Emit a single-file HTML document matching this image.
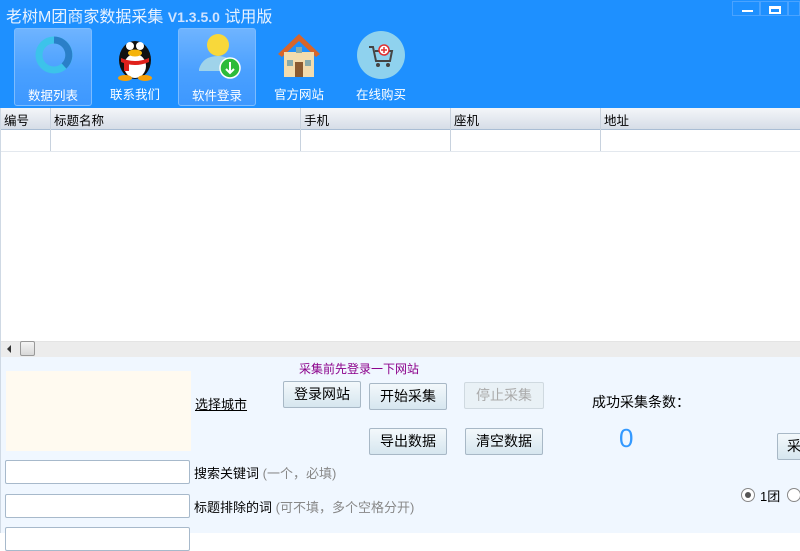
<!DOCTYPE html>
<html><head><meta charset="utf-8"><style>
*{margin:0;padding:0;box-sizing:border-box}
body{width:800px;height:533px;overflow:hidden;background:#fff;font-family:"Liberation Sans","Noto Sans CJK SC","WenQuanYi Zen Hei",sans-serif;font-size:12px;position:relative}
.abs{position:absolute}
.top{left:0;top:0;width:800px;height:108px;background:#1e90ff}
.title{left:6px;top:3px;color:#fff;font-size:16px;color:#e8f2ff}
.title .v{font-size:14px;font-weight:bold;color:#cfe3ff}
.tb{top:28px;width:78px;height:78px;color:#fff;font-size:12.5px;text-align:center}
.tb.sel{background:linear-gradient(#6fb4ff,#4aa0ff 55%,#3d98ff);border:1px solid #7cbcff;border-radius:3px}
.tb span{position:absolute;left:0;right:0;top:56px}
.tb svg{position:absolute;left:14px;top:2px}
.hdr{top:108px;left:0;width:800px;height:22px;background:linear-gradient(#f4f6f9,#d6dde7);border-bottom:1px solid #a9bdd4}
.hdr div{position:absolute;top:2px;font-size:12.5px}
.col{top:108px;width:1px;height:43px;background:#c8d2de}
.panel{left:0;top:357px;width:800px;height:176px;background:#f0f7ff;border-left:1px solid #cfd9e4}
.btn{height:27px;border:1px solid #a8b8c6;border-radius:2px;background:linear-gradient(#f3f8fb,#d6e6ef);font-size:14px;text-align:center;line-height:25px}
.inp{left:5px;width:185px;height:24px;background:#fff;border:1px solid #a7b9cb;border-radius:2px}
.lbl{font-size:13px}
.gray{color:#888}
</style></head><body>
<div class="abs top"></div>
<div class="abs title">老树M团商家数据采集 <span class="v">V1.3.5.0</span> 试用版</div>
<div class="abs" style="left:732px;top:1px;width:28px;height:15px;border:1px solid #4aa3ff"><div class="abs" style="left:9px;top:8px;width:11px;height:2px;background:#fff"></div></div>
<div class="abs" style="left:760px;top:1px;width:28px;height:15px;border:1px solid #4aa3ff"><div class="abs" style="left:8px;top:4px;width:12px;height:8px;border:2px solid #fff;border-top-width:3px"></div></div>
<div class="abs" style="left:788px;top:1px;width:12px;height:15px;border:1px solid #4aa3ff"></div>

<div class="abs tb sel" style="left:14px"><svg width="50" height="50"><circle cx="25" cy="24" r="15" fill="none" stroke="#3cc3ea" stroke-width="7"/><path d="M25 9 A15 15 0 0 1 35 35" fill="none" stroke="#2a7fc8" stroke-width="7"/></svg><span>数据列表</span></div>
<div class="abs tb" style="left:96px"><svg width="50" height="52"><ellipse cx="25" cy="30" rx="16" ry="19" fill="#111"/><ellipse cx="25" cy="36" rx="11" ry="12" fill="#fff"/><circle cx="20" cy="16" r="4" fill="#fff"/><circle cx="30" cy="16" r="4" fill="#fff"/><ellipse cx="25" cy="23" rx="7" ry="3.5" fill="#f5b40a"/><path d="M11 28 Q25 34 39 28 L39 32 Q25 38 11 32Z" fill="#e0201b"/><rect x="14" y="31" width="5" height="10" fill="#e0201b"/><ellipse cx="15" cy="48" rx="7" ry="3" fill="#f5a00a"/><ellipse cx="35" cy="48" rx="7" ry="3" fill="#f5a00a"/></svg><span>联系我们</span></div>
<div class="abs tb sel" style="left:178px"><svg width="50" height="50"><circle cx="25" cy="14" r="11" fill="#f8d83a"/><path d="M6 38 Q10 25 25 25 Q36 25 40 34 L40 40 L6 40Z" fill="#9fd3ea"/><circle cx="37" cy="37" r="10" fill="#2dbb3a" stroke="#fff" stroke-width="1.5"/><path d="M37 31 V42 M33 38 L37 42 L41 38" stroke="#fff" stroke-width="2" fill="none"/></svg><span>软件登录</span></div>
<div class="abs tb" style="left:260px"><svg width="50" height="52"><path d="M4 24 L25 4 L46 24 L42 27 L25 11 L8 27Z" fill="#d8652a"/><rect x="10" y="22" width="30" height="25" fill="#f3dcae"/><rect x="21" y="32" width="8" height="15" fill="#8a5a30"/><rect x="13" y="30" width="6" height="6" fill="#8aa"/><rect x="31" y="30" width="6" height="6" fill="#8aa"/><rect x="22" y="17" width="6" height="6" fill="#8aa"/></svg><span>官方网站</span></div>
<div class="abs tb" style="left:342px"><svg width="50" height="50"><circle cx="25" cy="25" r="24" fill="#8fd2ee"/><path d="M13 17 L17 17 L20 31 L34 31 L36 21 L19 21" fill="none" stroke="#444" stroke-width="2"/><circle cx="22" cy="35" r="2" fill="#444"/><circle cx="32" cy="35" r="2" fill="#444"/><circle cx="28" cy="20" r="5" fill="#fff" stroke="#e03030" stroke-width="1.5"/><path d="M28 17 V23 M25 20 H31" stroke="#e03030" stroke-width="1.5"/></svg><span>在线购买</span></div>

<div class="abs hdr"><div style="left:4px">编号</div><div style="left:54px">标题名称</div><div style="left:304px">手机</div><div style="left:454px">座机</div><div style="left:604px">地址</div></div>
<div class="abs col" style="left:50px"></div><div class="abs col" style="left:300px"></div><div class="abs col" style="left:450px"></div><div class="abs col" style="left:600px"></div>
<div class="abs" style="left:0;top:151px;width:800px;height:1px;background:#e3e8ee"></div>
<div class="abs" style="left:0;top:108px;width:1px;height:249px;background:#cfd9e4"></div>
<div class="abs" style="left:1px;top:341px;width:799px;height:16px;background:#ececec;border-top:1px solid #e4e4e4"></div>
<div class="abs" style="left:7px;top:345px;width:0;height:0;border:4px solid transparent;border-right-color:#333;border-left:0"></div>
<div class="abs" style="left:20px;top:341px;width:15px;height:15px;border:1px solid #999;border-radius:2px;background:linear-gradient(#f4f4f4,#d8d8d8)"></div>

<div class="abs panel"></div>
<div class="abs" style="left:299px;top:360px;color:#8b008b">采集前先登录一下网站</div>
<div class="abs" style="left:6px;top:371px;width:185px;height:80px;background:#fffaf0"></div>
<div class="abs lbl" style="left:195px;top:394px;text-decoration:underline">选择城市</div>
<div class="abs btn" style="left:283px;top:381px;width:78px">登录网站</div>
<div class="abs btn" style="left:369px;top:383px;width:78px">开始采集</div>
<div class="abs btn" style="left:464px;top:382px;width:80px;color:#aaa;border-color:#cfd9e0;background:#e9f1f6">停止采集</div>
<div class="abs" style="left:592px;top:392px;font-size:14px">成功采集条数：</div>
<div class="abs" style="left:619px;top:423px;font-size:26px;color:#3399ff">0</div>
<div class="abs btn" style="left:369px;top:428px;width:78px">导出数据</div>
<div class="abs btn" style="left:465px;top:428px;width:78px">清空数据</div>
<div class="abs btn" style="left:777px;top:433px;width:30px;text-align:left;padding-left:9px">采</div>
<div class="abs inp" style="top:460px"></div>
<div class="abs lbl" style="left:194px;top:463px">搜索关键词 <span class="gray">(一个，必填)</span></div>
<div class="abs inp" style="top:494px"></div>
<div class="abs lbl" style="left:194px;top:497px">标题排除的词 <span class="gray">(可不填，多个空格分开)</span></div>
<div class="abs inp" style="top:527px"></div>
<div class="abs" style="left:741px;top:488px;width:14px;height:14px;border-radius:50%;border:1px solid #888;background:#fff"><div class="abs" style="left:3px;top:3px;width:6px;height:6px;border-radius:50%;background:#555"></div></div>
<div class="abs lbl" style="left:760px;top:486px">1团</div>
<div class="abs" style="left:787px;top:488px;width:14px;height:14px;border-radius:50%;border:1px solid #888;background:#fff"></div>
</body></html>
